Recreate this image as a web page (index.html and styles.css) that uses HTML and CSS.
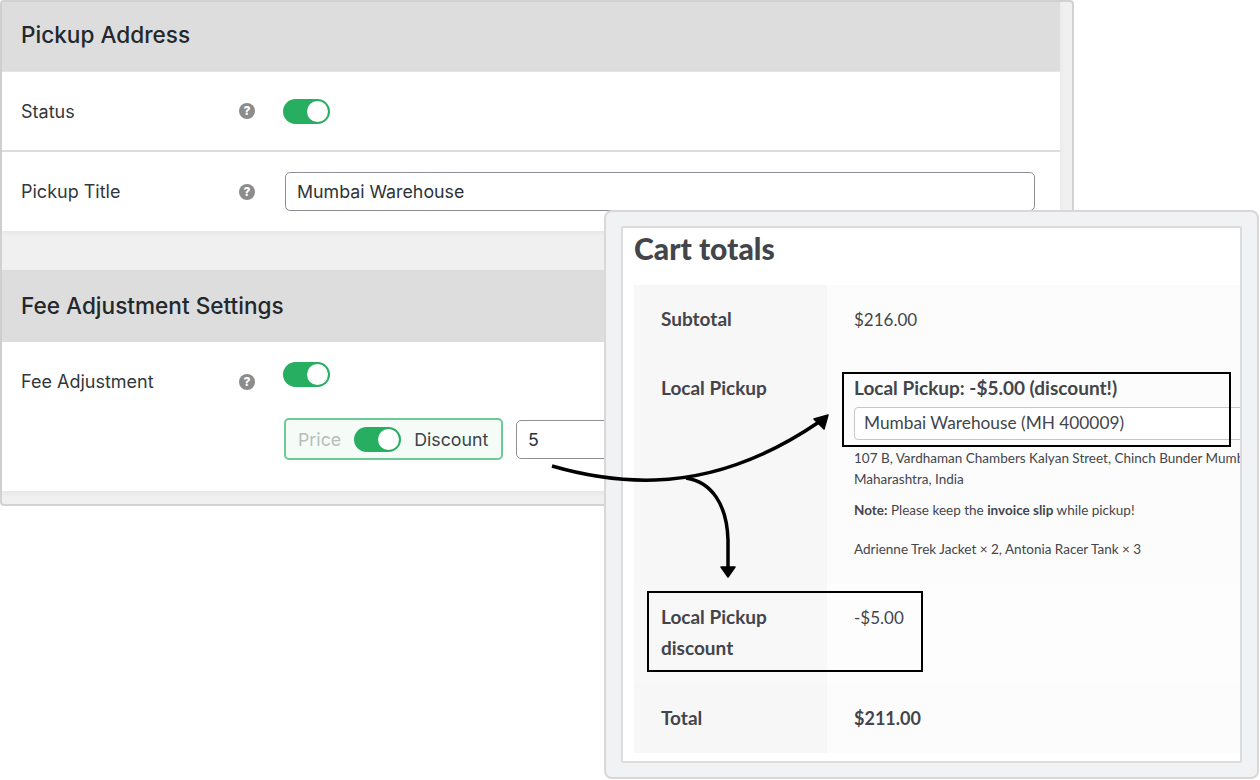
FILE: index.html
```html
<!DOCTYPE html>
<html lang="en">

<head>
    <meta charset="UTF-8">
    <meta name="viewport" content="width=device-width, initial-scale=1.0">
    <title>Local Pickup Fee Adjustment</title>
    <link rel="stylesheet" href="styles.css">
</head>

<body>

    <div class="settings">
        <div class="settings-inner">
            <section class="section">
                <h2 class="section-title">Pickup Address</h2>
                <div class="row row-border">
                    <span class="row-label">Status</span>
                    <span class="help">?</span>
                    <span class="toggle"></span>
                </div>
                <div class="row">
                    <span class="row-label">Pickup Title</span>
                    <span class="help">?</span>
                    <div class="text-input">Mumbai Warehouse</div>
                </div>
            </section>

            <section class="section section-fee">
                <h2 class="section-title">Fee Adjustment Settings</h2>
                <div class="row row-fee">
                    <span class="row-label">Fee Adjustment</span>
                    <span class="help">?</span>
                    <div class="fee-fields">
                        <span class="toggle"></span>
                        <div class="fee-line">
                            <div class="fee-switch">
                                <span class="fee-off">Price</span>
                                <span class="toggle"></span>
                                <span class="fee-on">Discount</span>
                            </div>
                            <div class="text-input fee-amount">5</div>
                        </div>
                    </div>
                </div>
            </section>
        </div>
    </div>

    <div class="cart">
        <div class="cart-inner">
            <h2 class="cart-title">Cart totals</h2>
            <div class="cart-table">
                <div class="cart-row row-subtotal">
                    <div class="cart-head">Subtotal</div>
                    <div class="cart-cell">$216.00</div>
                </div>
                <div class="cart-row row-pickup">
                    <div class="cart-head">Local Pickup</div>
                    <div class="cart-cell">
                        <div class="pickup-name">Local Pickup: -$5.00 (discount!)</div>
                        <div class="pickup-select">Mumbai Warehouse (MH 400009)</div>
                        <p class="pickup-address">107 B, Vardhaman Chambers Kalyan Street, Chinch Bunder Mumbai,<br>Maharashtra, India</p>
                        <p class="pickup-note"><strong>Note:</strong> Please keep the <strong>invoice slip</strong> while pickup!</p>
                        <p class="pickup-items">Adrienne Trek Jacket × 2, Antonia Racer Tank × 3</p>
                    </div>
                </div>
                <div class="cart-row row-discount">
                    <div class="cart-head">Local Pickup<br>discount</div>
                    <div class="cart-cell">-$5.00</div>
                </div>
                <div class="cart-row row-total">
                    <div class="cart-head">Total</div>
                    <div class="cart-cell"><strong>$211.00</strong></div>
                </div>
            </div>
        </div>
    </div>

    <!-- callouts drawn over both panels -->
    <div class="callout callout-select"></div>
    <div class="callout callout-discount"></div>
    <svg class="arrows" width="1260" height="780" viewBox="0 0 1260 780">
        <path d="M552 466C590 477 625 481 655 480C720 478 775 452 819 422" fill="none" stroke="#000" stroke-width="3.5"/>
        <path d="M828 415L814 419L824 429Z" fill="#000" stroke="#000" stroke-width="1.5" stroke-linejoin="round"/>
        <path d="M686 478C712 482 727 505 728 540L728 568" fill="none" stroke="#000" stroke-width="3.5"/>
        <path d="M721 567L735 567L728 577Z" fill="#000" stroke="#000" stroke-width="1.5" stroke-linejoin="round"/>
    </svg>

</body>

</html>
```

FILE: styles.css
```css
/* General Styles */
body {
    margin: 0;
    width: 1260px;
    height: 780px;
    position: relative;
    overflow: hidden;
    background-color: #ffffff;
    font-family: 'Inter', sans-serif;
    color: #2c3338;
}

/* Settings panel */
.settings {
    width: 1074px;
    height: 506px;
    box-sizing: border-box;
    border: 2px solid #d3d1d1;
    border-radius: 4px;
    background-color: #f0f0f1;
    padding-right: 12px;
}

.section {
    background-color: #ffffff;
    box-shadow: 0 2px 6px rgba(0, 0, 0, 0.05);
}

.section-fee {
    margin-top: 39px;
}

.section-title {
    margin: 0;
    height: 69px;
    padding-left: 19px;
    line-height: 66px;
    font-size: 22.6px;
    font-weight: 500;
    background-color: #dddddd;
    color: #23282d;
    border-bottom: 1px solid #e4e4e4;
}

.section-fee .section-title {
    height: 72px;
    line-height: 71px;
    border-bottom: 0;
}

.row {
    display: flex;
    align-items: center;
    height: 79px;
    padding-left: 19px;
}

.row-border {
    height: 78px;
    border-bottom: 2px solid #dcdcde;
}

.row-label {
    width: 218px;
    font-size: 18px;
    color: #32373c;
}

.help {
    width: 16px;
    height: 16px;
    border-radius: 50%;
    background-color: #8c8c8c;
    color: #ffffff;
    font-size: 12px;
    font-weight: 800;
    line-height: 16px;
    text-align: center;
}

.toggle {
    display: block;
    position: relative;
    width: 47px;
    height: 25px;
    margin-left: 28px;
    box-sizing: border-box;
    border-radius: 13px;
    background-color: #27ae60;
}

.toggle::after {
    content: "";
    position: absolute;
    top: 2px;
    right: 2px;
    width: 21px;
    height: 21px;
    border-radius: 50%;
    background-color: #ffffff;
}

.text-input {
    width: 750px;
    height: 39px;
    margin-left: 30px;
    padding-left: 11px;
    box-sizing: border-box;
    border: 1px solid #8c8f94;
    border-radius: 5px;
    background-color: #ffffff;
    font-size: 17.8px;
    line-height: 37px;
    color: #2c3338;
}

/* Fee adjustment row */
.row-fee {
    height: 149px;
    align-items: flex-start;
}

.row-fee .row-label {
    margin-top: 31px;
    line-height: 17px;
}

.row-fee .help {
    margin-top: 32px;
}

.fee-fields {
    display: flex;
    flex-direction: column;
    padding-top: 20px;
}

.fee-line {
    display: flex;
    align-items: center;
    margin-top: 31px;
    margin-left: 29px;
}

.fee-switch {
    display: flex;
    align-items: center;
    width: 219px;
    height: 42px;
    box-sizing: border-box;
    padding-left: 12px;
    border: 2px solid #6ccb94;
    border-radius: 5px;
    background-color: #f5fcf8;
    font-size: 17.8px;
}

.fee-switch .toggle {
    margin: 0 13px;
}

.fee-off {
    color: #b9bdbb;
}

.fee-on {
    color: #3c434a;
}

.fee-amount {
    width: 200px;
    margin-left: 13px;
}

/* Cart panel */
.cart {
    position: absolute;
    left: 604px;
    top: 210px;
    width: 655px;
    height: 569px;
    box-sizing: border-box;
    padding: 14px 15px;
    border: 2px solid #d9d7d7;
    border-radius: 8px;
    background-color: #f1f2f4;
}

.cart-inner {
    height: 100%;
    box-sizing: border-box;
    padding-left: 11px;
    border: 2px solid #dcdcdc;
    border-radius: 2px;
    background-color: #ffffff;
    overflow: hidden;
    font-family: 'Lato', sans-serif;
    color: #43454b;
}

.cart-title {
    margin: 0;
    height: 57px;
    font-size: 30px;
    font-weight: 900;
    line-height: 41px;
}

.cart-row {
    display: flex;
    font-size: 17px;
}

.cart-head {
    flex: none;
    width: 166px;
    padding-left: 27px;
    background-color: #f7f7f8;
    font-size: 19px;
    font-weight: 700;
    line-height: 31px;
}

.cart-cell {
    flex: 1;
    min-width: 0;
    padding-left: 27px;
    background-color: #fcfcfc;
    line-height: 31px;
}

.row-subtotal {
    height: 67px;
}

.row-subtotal .cart-head {
    padding-top: 18px;
}

.row-subtotal .cart-cell {
    padding-top: 19px;
}

.row-pickup {
    height: 232px;
}

.row-pickup .cart-head,
.row-pickup .cart-cell {
    padding-top: 20px;
}

.pickup-name {
    font-size: 19px;
    font-weight: 700;
    line-height: 31px;
}

.pickup-select {
    width: 420px;
    height: 33px;
    margin-top: 4px;
    margin-bottom: 8px;
    padding-left: 9px;
    box-sizing: border-box;
    border: 1px solid #c7c7c7;
    border-radius: 4px;
    background-color: #ffffff;
    font-size: 17.3px;
    line-height: 30px;
}

.pickup-address,
.pickup-note,
.pickup-items {
    margin: 0;
    font-size: 13.5px;
    line-height: 21px;
    white-space: nowrap;
}

.pickup-note {
    margin-top: 10px;
}

.pickup-items {
    margin-top: 18px;
}

.row-discount {
    height: 100px;
}

.row-discount .cart-head {
    padding-top: 17px;
    background-color: #f8f8f9;
}

.row-discount .cart-cell {
    padding-top: 18px;
    background-color: #fdfdfd;
}

.row-total {
    height: 69px;
}

.row-total .cart-head {
    padding-top: 18px;
}

.row-total .cart-cell {
    padding-top: 19px;
}

.row-total strong {
    font-size: 18px;
}

/* Callouts */
.callout {
    position: absolute;
    box-sizing: border-box;
    border: 2px solid #000000;
}

.callout-select {
    left: 842px;
    top: 372px;
    width: 389px;
    height: 75px;
}

.callout-discount {
    left: 647px;
    top: 591px;
    width: 276px;
    height: 81px;
}

.arrows {
    position: absolute;
    left: 0;
    top: 0;
}
```
